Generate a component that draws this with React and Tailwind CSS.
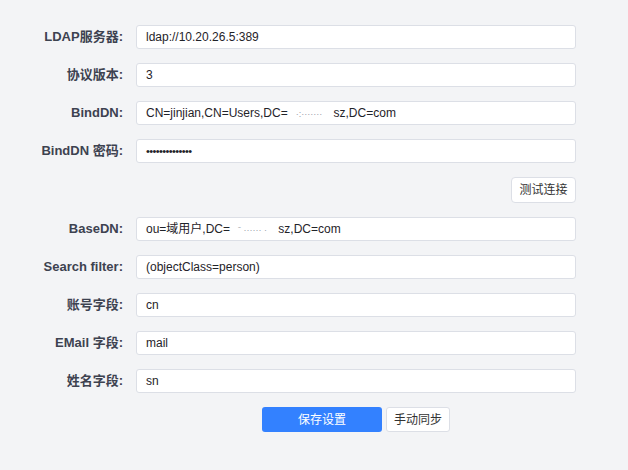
import { useState } from "react";

const fields = [
  { label: "LDAP服务器:", value: "ldap://10.20.26.5:389" },
  { label: "协议版本:", value: "3" },
  { label: "BindDN:", value: "CN=jinjian,CN=Users,DC=", masked: "·:·······", tail: " sz,DC=com" },
  { label: "BindDN 密码:", value: "••••••••••••••", password: true },
];

const fields2 = [
  { label: "BaseDN:", value: "ou=域用户,DC=", masked: "ˉ  ······ ·", tail: " sz,DC=com" },
  { label: "Search filter:", value: "(objectClass=person)" },
  { label: "账号字段:", value: "cn" },
  { label: "EMail 字段:", value: "mail" },
  { label: "姓名字段:", value: "sn" },
];

const font = { fontFamily: '"Liberation Sans", "Noto Sans CJK SC", Arial, sans-serif' };

function Row({ label, value, masked, tail, password }) {
  return (
    <div className="flex items-center">
      <label className="w-[123px] text-right text-[13px] font-bold text-[#3d4250] whitespace-nowrap">
        {label}
      </label>
      <div className="ml-[13px] w-[440px] h-[24px] bg-white border border-[#dcdfe6] rounded-[3px] flex items-center px-[9px] text-[12px] text-[#1f2329] whitespace-nowrap overflow-hidden">
        {password ? (
          <span className="text-[11px] tracking-[-0.6px]">{value}</span>
        ) : (
          <span>
            {value}
            {masked && <span className="text-[#9aa0aa] text-[9px] px-[8px]">{masked}</span>}
            {tail}
          </span>
        )}
      </div>
    </div>
  );
}

export default function App() {
  const [saving, setSaving] = useState(false);

  return (
    <div className="w-[628px] h-[470px] bg-[#f3f4f6] pt-[25px]" style={font}>
      <div className="flex flex-col gap-[14px]">
        {fields.map((f) => (
          <Row key={f.label} {...f} />
        ))}

        <div className="flex pl-[136px] w-[576px] justify-end">
          <button className="h-[26px] w-[65px] bg-white border border-[#dcdfe6] rounded-[4px] text-[12px] text-[#333]">
            测试连接
          </button>
        </div>

        {fields2.map((f) => (
          <Row key={f.label} {...f} />
        ))}

        <div className="flex ml-[136px] w-[440px] justify-center gap-[4px]">
          <button
            onClick={() => setSaving(!saving)}
            className="h-[25px] w-[120px] bg-[#3381ff] rounded-[3px] text-[12px] text-white"
          >
            保存设置
          </button>
          <button className="h-[25px] w-[64px] bg-white border border-[#dcdfe6] rounded-[3px] text-[12px] text-[#333]">
            手动同步
          </button>
        </div>
      </div>
    </div>
  );
}
